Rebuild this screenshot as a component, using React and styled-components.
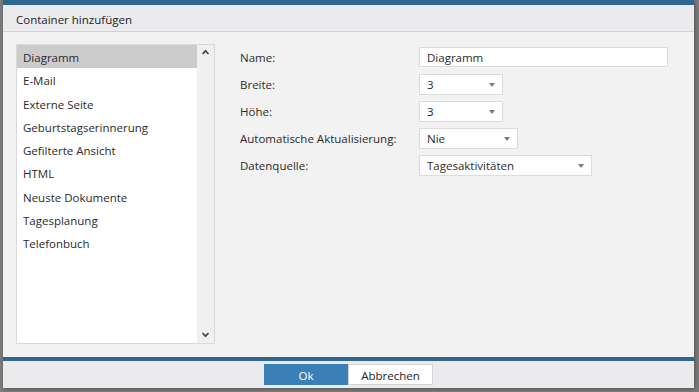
import React from 'react'
import styled, { createGlobalStyle } from 'styled-components'

const GlobalStyle = createGlobalStyle`
  html, body {
    margin: 0;
    padding: 0;
    background: #7c7c7c;
    font-family: "Open Sans", "Noto Sans", sans-serif;
    font-size: 11.5px;
    color: #2b2b2b;
  }
`

const listItems = [
  'Diagramm',
  'E-Mail',
  'Externe Seite',
  'Geburtstagserinnerung',
  'Gefilterte Ansicht',
  'HTML',
  'Neuste Dokumente',
  'Tagesplanung',
  'Telefonbuch',
]

const fields = [
  { label: 'Name:', value: 'Diagramm', type: 'text', width: 249 },
  { label: 'Breite:', value: '3', type: 'select', width: 84 },
  { label: 'Höhe:', value: '3', type: 'select', width: 84 },
  { label: 'Automatische Aktualisierung:', value: 'Nie', type: 'select', width: 99 },
  { label: 'Datenquelle:', value: 'Tagesaktivitäten', type: 'select', width: 173 },
]

const Page = styled.div`
  width: 699px;
  height: 392px;
  overflow: hidden;
`

const Dialog = styled.div`
  margin-left: 3px;
  width: 691px;
  height: 388px;
  display: flex;
  flex-direction: column;
  background: #f2f2f2;
  box-shadow: 1px 1px 4px rgba(0, 0, 0, 0.35);
`

const TopBar = styled.div`
  height: 5px;
  background: #2f6790;
`

const Header = styled.div`
  height: 27px;
  box-sizing: border-box;
  display: flex;
  align-items: center;
  padding: 3px 0 0 13px;
  background: #ebebed;
  border-bottom: 1px solid #d3d3d3;
  font-size: 11.5px;
  color: #222;
`

const Body = styled.div`
  flex: 1;
  display: flex;
  padding: 12px 0 0 13px;
`

const ListBox = styled.div`
  width: 197px;
  height: 298px;
  display: flex;
  background: #fff;
  border: 1px solid #d9d9d9;
`

const Items = styled.ul`
  flex: 1;
  list-style: none;
  margin: 0;
  padding: 0;
`

const Item = styled.li`
  height: 23.25px;
  box-sizing: border-box;
  display: flex;
  align-items: center;
  padding: 2px 0 0 6px;
  background: ${p => (p.$selected ? '#cccccc' : 'transparent')};
`

const ScrollBar = styled.div`
  width: 17px;
  display: flex;
  flex-direction: column;
  justify-content: space-between;
  align-items: center;
  background: #f0f0f0;
  padding: 4px 0 5px;
  box-sizing: border-box;
`

const Form = styled.div`
  margin-left: 25px;
  padding-top: 3px;
  display: flex;
  flex-direction: column;
  gap: 6px;
`

const Row = styled.div`
  display: flex;
  align-items: center;
  height: ${p => (p.$text ? 20 : 21)}px;
  margin-bottom: ${p => (p.$text ? 1 : 0)}px;
`

const Label = styled.div`
  width: 179px;
`

const TextInput = styled.div`
  box-sizing: border-box;
  height: 100%;
  background: #fff;
  border: 1px solid #dcdcdc;
  padding-left: 7px;
  display: flex;
  align-items: center;
`

const Select = styled(TextInput)`
  justify-content: space-between;
  padding-right: 7px;
`

const Caret = styled.span`
  width: 0;
  height: 0;
  border-left: 3.5px solid transparent;
  border-right: 3.5px solid transparent;
  border-top: 4px solid #7a7a7a;
`

const BottomBar = styled.div`
  height: 4px;
  background: #2f6790;
`

const Footer = styled.div`
  height: 27px;
  display: flex;
  justify-content: center;
  align-items: flex-start;
  padding-top: 3px;
  box-sizing: border-box;
  background: #ebebed;
`

const Button = styled.button`
  height: 21px;
  width: ${p => p.$width}px;
  box-sizing: border-box;
  font-family: inherit;
  font-size: 11.5px;
  padding: 1px 0 0;
  border: 1px solid ${p => (p.$primary ? '#3a7fb5' : '#d6d6d6')};
  background: ${p => (p.$primary ? '#3a7fb5' : '#fff')};
  color: ${p => (p.$primary ? '#fff' : '#222')};
`

const Chevron = ({ up }) => (
  <svg width="9" height="6" viewBox="0 0 9 6">
    <path
      d={up ? 'M1.5 5 L4.5 1.8 L7.5 5' : 'M1.5 1 L4.5 4.2 L7.5 1'}
      fill="none"
      stroke="#4a4a4a"
      strokeWidth="1.8"
    />
  </svg>
)

export default function App() {
  return (
    <Page>
      <GlobalStyle />
      <Dialog>
        <TopBar />
        <Header>Container hinzufügen</Header>
        <Body>
          <ListBox>
            <Items>
              {listItems.map((name, i) => (
                <Item key={name} $selected={i === 0}>{name}</Item>
              ))}
            </Items>
            <ScrollBar>
              <Chevron up />
              <Chevron />
            </ScrollBar>
          </ListBox>
          <Form>
            {fields.map(f => (
              <Row key={f.label} $text={f.type === 'text'}>
                <Label>{f.label}</Label>
                {f.type === 'text' ? (
                  <TextInput style={{ width: f.width }}>{f.value}</TextInput>
                ) : (
                  <Select style={{ width: f.width }}>
                    {f.value}
                    <Caret />
                  </Select>
                )}
              </Row>
            ))}
          </Form>
        </Body>
        <BottomBar />
        <Footer>
          <Button $primary $width={84}>Ok</Button>
          <Button $width={85}>Abbrechen</Button>
        </Footer>
      </Dialog>
    </Page>
  )
}
